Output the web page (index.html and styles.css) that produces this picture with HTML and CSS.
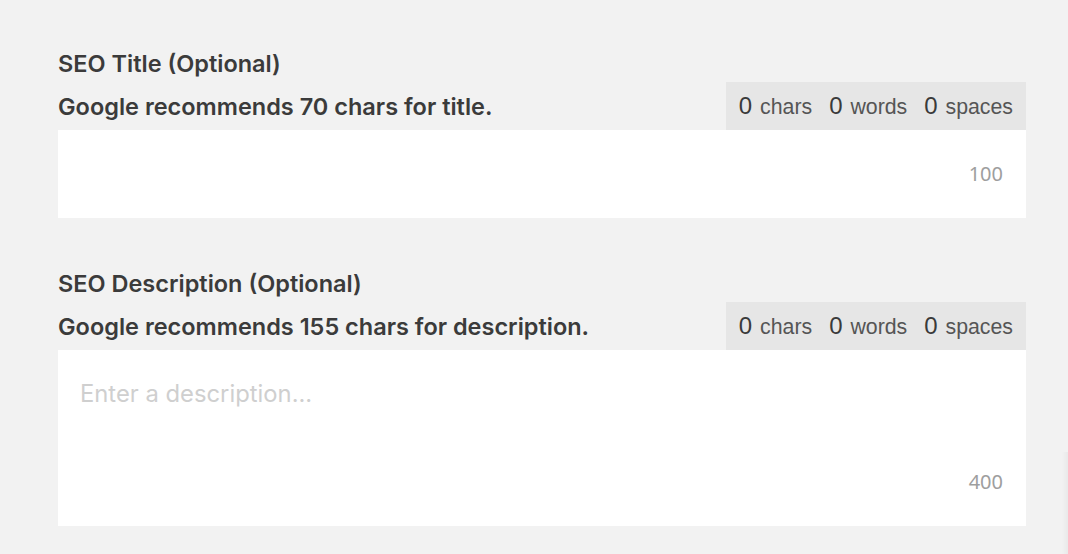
FILE: index.html
```html
<!DOCTYPE html>
<html>
<head>
    <title>SEO Settings</title>
    <link rel="stylesheet" href="styles.css">
</head>
<body>
    <div class="container">
        <div class="section">
            <label class="label" for="seoTitle">SEO Title (Optional)</label>
            <div class="header_row">
                <span class="hint">Google recommends 70 chars for title.</span>
                <div class="counter">
                    <span class="count"><b>0</b> chars</span>
                    <span class="count"><b>0</b> words</span>
                    <span class="count"><b>0</b> spaces</span>
                </div>
            </div>
            <div class="field">
                <input type="text" id="seoTitle" class="input_title">
                <span class="limit">100</span>
            </div>
        </div>
        <div class="section">
            <label class="label" for="seoDesc">SEO Description (Optional)</label>
            <div class="header_row">
                <span class="hint">Google recommends 155 chars for description.</span>
                <div class="counter">
                    <span class="count"><b>0</b> chars</span>
                    <span class="count"><b>0</b> words</span>
                    <span class="count"><b>0</b> spaces</span>
                </div>
            </div>
            <div class="field">
                <textarea id="seoDesc" class="input_desc" placeholder="Enter a description..."></textarea>
                <span class="limit">400</span>
            </div>
        </div>
    </div>
    <div class="edge"></div>
</body>
</html>
```

FILE: styles.css
```css
* {
    padding: 0;
    margin: 0;
    box-sizing: border-box;
}
body {
    min-height: 100vh;
    width: 100%;
    font-family: Inter, "Noto Sans", sans-serif;
    background-color: #f2f2f2;
    color: #3b3b3b;
    overflow: hidden;
}
.container {
    width: 968px;
    margin-left: 58px;
    padding-top: 50px;
    display: flex;
    flex-direction: column;
    gap: 52px;
}
.label {
    display: block;
    font-size: 23.5px;
    line-height: 28px;
    font-weight: 600;
    margin-bottom: 4px;
}
.header_row {
    display: flex;
    align-items: center;
    justify-content: space-between;
    height: 48px;
}
.hint {
    font-size: 23.5px;
    font-weight: 600;
    line-height: 28px;
    padding-top: 2px;
}
.counter {
    height: 48px;
    width: 300px;
    flex-shrink: 0;
    background-color: #e6e6e6;
    display: flex;
    align-items: center;
    justify-content: flex-end;
    gap: 17px;
    padding: 0 13px 0 0;
    font-family: "Liberation Sans", Arial, sans-serif;
    font-size: 21.3px;
    color: #555;
    white-space: nowrap;
}
.count {
    flex-shrink: 0;
}
.count b {
    font-weight: normal;
    font-size: 24px;
    color: #3a3a3a;
    margin-right: 2px;
}
.field {
    position: relative;
    background-color: #ffffff;
}
.input_title,
.input_desc {
    display: block;
    width: 100%;
    border: none;
    outline: none;
    background: transparent;
    font-family: Inter, "Noto Sans", sans-serif;
    font-size: 23.8px;
    color: #333;
    resize: none;
}
.input_title {
    height: 88px;
    padding: 0 22px;
}
.input_desc {
    height: 176px;
    padding: 30px 22px;
    line-height: 28px;
}
.input_desc::placeholder {
    color: #cfcfcf;
}
.limit {
    position: absolute;
    right: 23px;
    bottom: 32px;
    font-family: "Noto Sans", sans-serif;
    font-size: 20px;
    line-height: 24px;
    color: #9e9e9e;
}
.edge {
    position: fixed;
    right: 0;
    top: 452px;
    width: 6px;
    height: 102px;
    background: linear-gradient(to right, #f2f2f2, #e9e9e9);
}
```
